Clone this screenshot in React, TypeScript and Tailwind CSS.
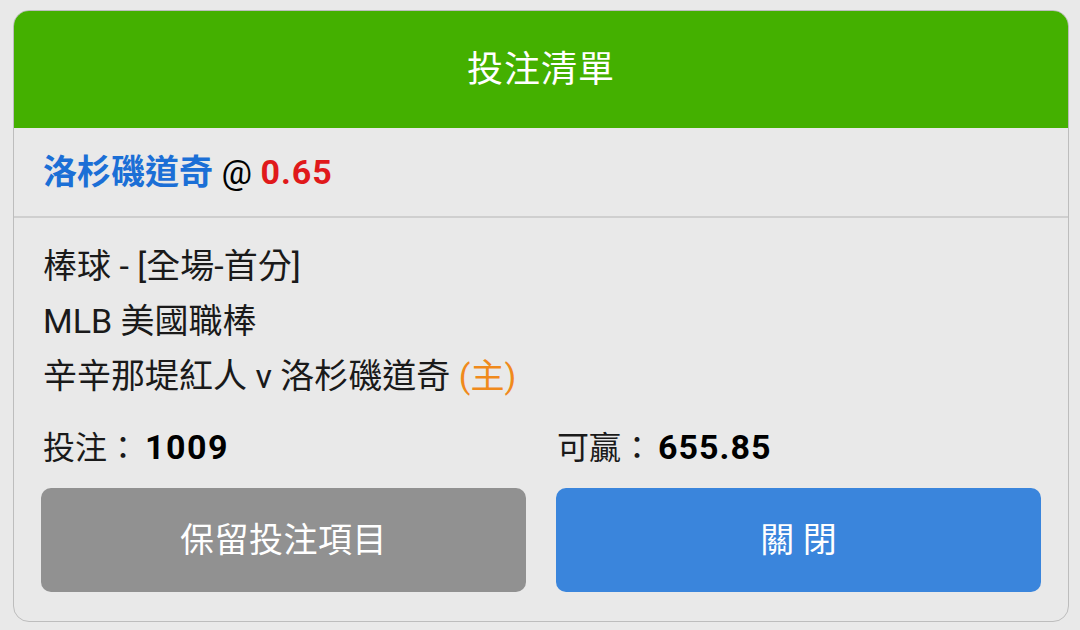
import React from 'react';

const font = { fontFamily: 'Roboto, "Noto Sans CJK TC", sans-serif' };

export default function App() {
  return (
    <div className="w-[1080px] h-[630px] bg-[#e9e9e9] pt-[10px] pl-[13px]" style={font}>
      <div className="w-[1056px] h-[612px] rounded-[16px] border border-[#bdbdbd] bg-[#e9e9e9] overflow-hidden">
        {/* Header */}
        <div className="h-[117px] bg-[#44b000] flex items-center justify-center">
          <span className="text-white text-[36px] tracking-[1px]">投注清單</span>
        </div>

        {/* Selection */}
        <div className="h-[90px] flex items-center pl-[29px] border-b-2 border-[#cfcfcf] text-[34px] whitespace-pre">
          <span className="font-bold text-[#1b6fd6]">洛杉磯道奇</span>
          <span className="text-black"> @ </span>
          <span className="font-bold text-[#e0191b] tracking-[1px]">0.65</span>
        </div>

        {/* Details */}
        <div className="px-[27px] pt-[21px] text-[34px] text-[#1a1a1a]">
          <div className="leading-[55px] px-[2px]">棒球 - [全場-首分]</div>
          <div className="leading-[55px] px-[2px]">MLB 美國職棒</div>
          <div className="leading-[55px] px-[2px]">
            辛辛那堤紅人 v 洛杉磯道奇 <span className="text-[#f08a1c]">(主)</span>
          </div>

          <div className="flex items-baseline mt-[16px] leading-[55px] text-[32px]">
            <div className="w-[514px] px-[2px]">
              投注：<span className="font-bold text-black text-[34px] ml-[6px] tracking-[1.5px]">1009</span>
            </div>
            <div className="px-[2px]">
              可贏：<span className="font-bold text-black text-[34px] ml-[5px] tracking-[1px]">655.85</span>
            </div>
          </div>

          <div className="flex gap-[30px] mt-[12px]">
            <button className="w-[485px] h-[104px] rounded-[10px] bg-[#919191] text-white text-[34px] tracking-[0.5px]">
              保留投注項目
            </button>
            <button className="w-[485px] h-[104px] rounded-[10px] bg-[#3a85dc] text-white text-[34px]">
              關 閉
            </button>
          </div>
        </div>
      </div>
    </div>
  );
}
